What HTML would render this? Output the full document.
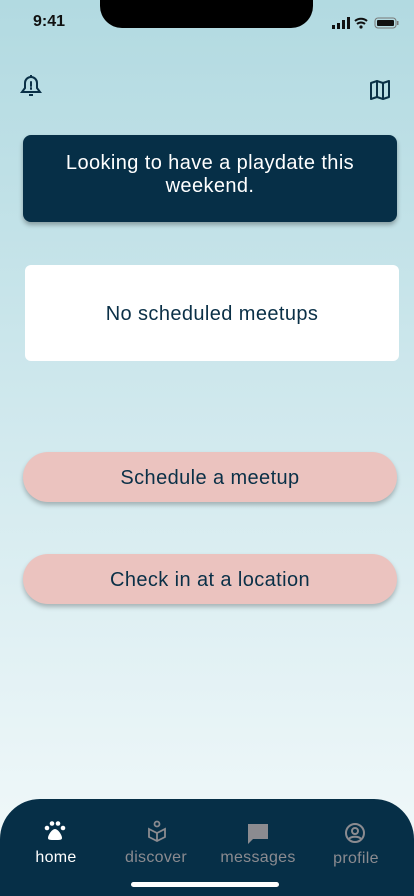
<!DOCTYPE html>
<html><head><meta charset="utf-8"><style>
*{margin:0;padding:0;box-sizing:border-box}
body{width:414px;height:896px;overflow:hidden;font-family:"Liberation Sans",sans-serif;background:linear-gradient(#b2dae1 0%,#cfe8ed 45%,#f4fafb 100%);position:relative;color:#0a3047}
.notch{position:absolute;left:100px;top:0;width:213px;height:28px;background:#000;border-radius:0 0 22px 22px}
.time{position:absolute;left:33px;top:13px;font-weight:bold;font-size:16px;color:#111}
.card1{position:absolute;left:23px;top:135px;width:374px;height:87px;background:#062f47;border-radius:8px;color:#fff;font-size:20px;letter-spacing:0.4px;text-align:center;padding-top:17px;line-height:23px;box-shadow:0 3px 5px rgba(0,0,0,.3)}
.card2{position:absolute;left:25px;top:265px;width:374px;height:96px;background:#fff;border-radius:6px;font-size:20px;letter-spacing:0.4px;text-align:center;line-height:98px;color:#0a3047}
.btn{position:absolute;left:23px;width:374px;height:50px;background:#ebc3bf;border-radius:25px;font-size:20px;letter-spacing:0.4px;text-align:center;line-height:52px;box-shadow:0 3px 5px rgba(0,0,0,.25);color:#0a3047}
.nav{position:absolute;left:0;top:799px;width:414px;height:97px;background:#062f47;border-radius:40px 40px 0 0}
.it{position:absolute;top:50px;font-size:16px;color:#8b8b90;text-align:center;width:100px;letter-spacing:0.3px}
.bar{position:absolute;left:131px;top:882px;width:148px;height:5px;border-radius:3px;background:#fff}
</style></head><body>
<div class="time">9:41</div>
<div class="notch"></div>
<svg style="position:absolute;left:332px;top:17px" width="68" height="12" viewBox="0 0 68 12">
<rect x="0" y="8" width="3" height="4" fill="#111"/><rect x="5" y="6" width="3" height="6" fill="#111"/><rect x="10" y="3" width="3" height="9" fill="#111"/><rect x="15" y="0" width="3" height="12" fill="#111"/>
<path d="M23 4a9 9 0 0 1 12 0M25 7a6 6 0 0 1 8 0" stroke="#111" stroke-width="2" fill="none"/><circle cx="29" cy="10" r="1.6" fill="#111"/>
<rect x="43" y="1" width="21" height="10" rx="3" stroke="#777" fill="none"/><rect x="45" y="3" width="17" height="6" rx="1" fill="#111"/><rect x="65" y="4" width="1.5" height="4" fill="#777"/>
</svg>
<svg style="position:absolute;left:20px;top:74px" width="22" height="24" viewBox="0 0 22 24" fill="none" stroke="#0a3047" stroke-width="2">
<path d="M11 3a6 6 0 0 0-6 6v5l-3 4h18l-3-4V9a6 6 0 0 0-6-6zM11 1v2M9 21h4"/><path d="M11 8v4M11 14v1" stroke-linecap="round"/></svg>
<svg style="position:absolute;left:369px;top:79px" width="22" height="22" viewBox="0 0 22 22" fill="none" stroke="#0a3047" stroke-width="2" stroke-linejoin="round">
<path d="M2 4l6-2 6 2 6-2v16l-6 2-6-2-6 2zM8 2v16M14 4v16"/></svg>
<div class="card1">Looking to have a playdate this<br>weekend.</div>
<div class="card2">No scheduled meetups</div>
<div class="btn" style="top:452px">Schedule a meetup</div>
<div class="btn" style="top:554px">Check in at a location</div>
<div class="nav">
<svg style="position:absolute;left:44px;top:22px" width="22" height="20" viewBox="0 0 22 20" fill="#fff"><circle cx="3" cy="7" r="2.3"/><circle cx="8" cy="2.5" r="2.3"/><circle cx="14" cy="2.5" r="2.3"/><circle cx="19" cy="7" r="2.3"/><path d="M11 8c-3 0-7 6-7 9 0 2 2 2 7 2s7 0 7-2c0-3-4-9-7-9z"/></svg>
<svg style="position:absolute;left:147px;top:21px" width="20" height="22" viewBox="0 0 20 22" fill="none" stroke="#8b8b90" stroke-width="1.8"><circle cx="10" cy="4" r="2.5"/><path d="M2 9l8 4 8-4v8l-8 4-8-4zM10 13v8"/></svg>
<svg style="position:absolute;left:247px;top:24px" width="22" height="22" viewBox="0 0 22 22" fill="#8b8b90"><path d="M1 1h20v15H6l-5 5z"/></svg>
<svg style="position:absolute;left:344px;top:23px" width="22" height="22" viewBox="0 0 22 22" fill="none" stroke="#8b8b90" stroke-width="2"><circle cx="11" cy="11" r="9"/><circle cx="11" cy="9" r="3"/><path d="M5 17c2-3 10-3 12 0"/></svg>
<div class="it" style="left:6px;color:#fff">home</div>
<div class="it" style="left:106px">discover</div>
<div class="it" style="left:208px">messages</div>
<div class="it" style="left:306px;top:51px">profile</div>
</div>
<div class="bar"></div>
</body></html>
